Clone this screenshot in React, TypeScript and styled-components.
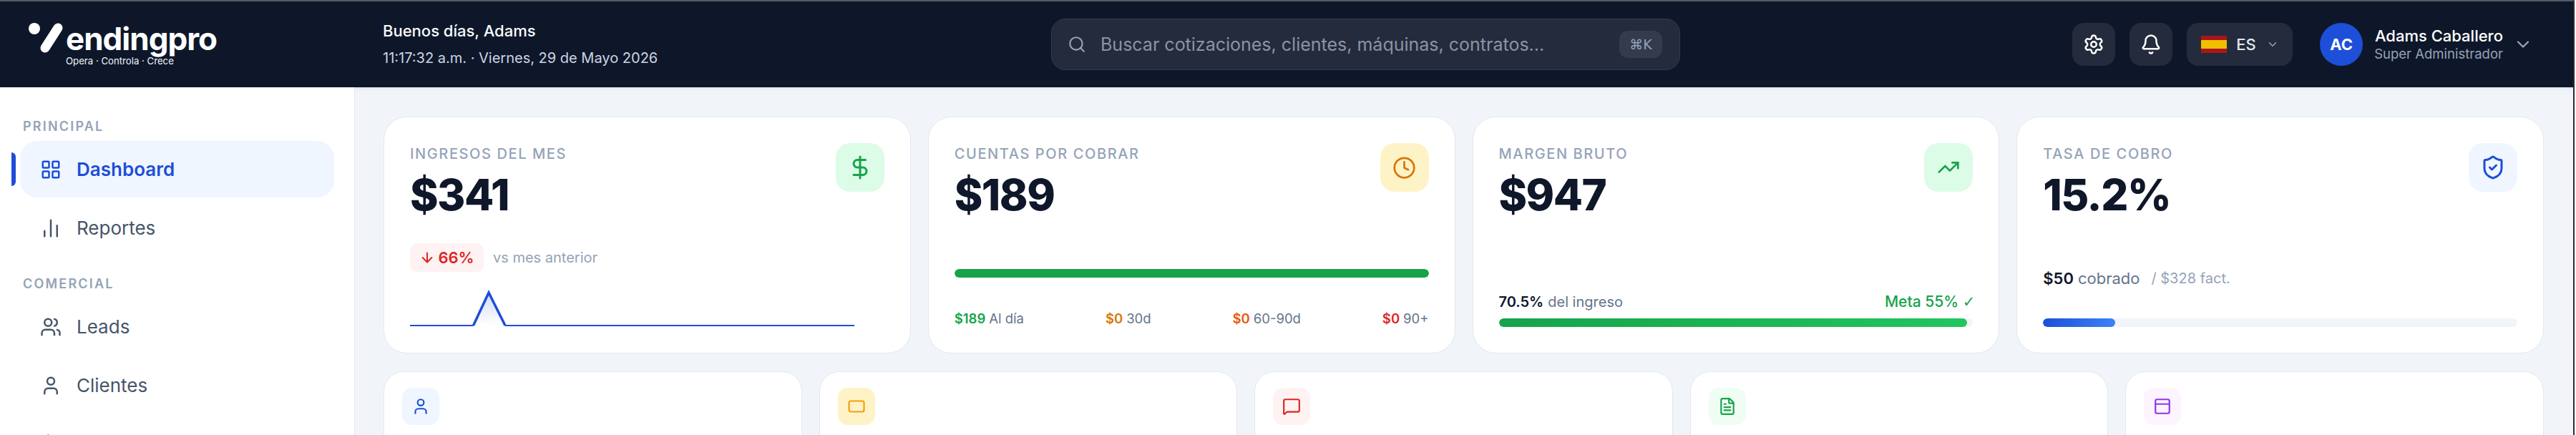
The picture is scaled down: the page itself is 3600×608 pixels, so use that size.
import React from "react";
import styled, { createGlobalStyle } from "styled-components";
import {
  Activity,
  ArrowDown,
  BarChart2,
  Bell,
  ChevronDown,
  Clock,
  DollarSign,
  FileText,
  LayoutGrid,
  MessageSquare,
  PanelTop,
  Search,
  Settings,
  ShieldCheck,
  TrendingUp,
  User,
  Users,
} from "lucide-react";

const GlobalStyle = createGlobalStyle`
  html, body { margin: 0; padding: 0; height: 100%; overflow: hidden; background: #fff; }
  * { box-sizing: border-box; }
  body { font-family: Inter, "Liberation Sans", sans-serif; }
`;

const Frame = styled.div`
  width: 3600px;
  height: 608px;
  padding-right: 2px;
  background: #fff;
`;

const Shell = styled.div`
  height: 100%;
  display: flex;
  flex-direction: column;
  overflow: hidden;
  border-top: 2px solid #555a63;
  border-right: 2px solid #2a2d33;
  background: #f1f5f9;
`;

const Header = styled.header`
  flex: 0 0 120px;
  display: flex;
  align-items: center;
  padding: 0 56px 0 38px;
  background: #0e172a;
`;

const LogoBox = styled.div`
  width: 497px;
  display: flex;
  align-items: flex-start;
`;

const LogoMark = styled.svg`
  flex: none;
  margin-top: -2px;
`;

const LogoWords = styled.div`
  display: flex;
  flex-direction: column;
`;

const LogoName = styled.div`
  font-size: 44px;
  line-height: 46px;
  font-weight: 700;
  letter-spacing: -1px;
  color: #fff;
`;

const LogoTag = styled.div`
  font-size: 13.2px;
  line-height: 16px;
  color: #f1f5f9;
`;

const Greeting = styled.div`
  width: 934px;
  display: flex;
  flex-direction: column;
  gap: 14px;
`;

const Hello = styled.div`
  font-size: 22px;
  line-height: 24px;
  font-weight: 500;
  color: #f8fafc;
`;

const Clockline = styled.div`
  font-size: 20px;
  line-height: 24px;
  color: #cbd5e1;
`;

const SearchBar = styled.div`
  width: 879px;
  height: 72px;
  display: flex;
  align-items: center;
  gap: 20px;
  padding: 0 24px 0 22px;
  background: #232b3c;
  border: 1px solid #333c4e;
  border-radius: 20px;
  color: #94a3b8;
`;

const SearchText = styled.div`
  flex: 1;
  font-size: 25px;
  color: #8b93a7;
`;

const Kbd = styled.div`
  width: 60px;
  height: 38px;
  display: flex;
  align-items: center;
  justify-content: center;
  font-family: "DejaVu Sans", sans-serif;
  font-size: 19px;
  color: #94a3b8;
  background: #333b4d;
  border-radius: 12px;
`;

const HeaderRight = styled.div`
  margin-left: auto;
  display: flex;
  align-items: center;
`;

const RoundBtn = styled.div`
  width: 60px;
  height: 60px;
  margin-right: 20px;
  display: flex;
  align-items: center;
  justify-content: center;
  color: #fff;
  background: #232b3c;
  border-radius: 16px;
`;

const LangBtn = styled.div`
  width: 148px;
  height: 60px;
  margin-right: 38px;
  display: flex;
  align-items: center;
  padding-left: 20px;
  background: #232b3c;
  border-radius: 16px;
  color: #94a3b8;
`;

const Flag = styled.div`
  width: 36px;
  height: 24px;
  background: linear-gradient(#aa151b 25%, #f1bf00 25%, #f1bf00 75%, #aa151b 75%);
`;

const LangText = styled.span`
  margin: 0 14px 0 13px;
  font-size: 22px;
  font-weight: 500;
  color: #e2e8f0;
`;

const Avatar = styled.div`
  width: 60px;
  height: 60px;
  display: flex;
  align-items: center;
  justify-content: center;
  border-radius: 50%;
  background: #1d4fd8;
  color: #fff;
  font-size: 22px;
  font-weight: 700;
`;

const UserInfo = styled.div`
  margin: 0 14px 0 16px;
  display: flex;
  flex-direction: column;
  align-items: flex-end;
`;

const UserName = styled.div`
  font-size: 22px;
  line-height: 26px;
  font-weight: 500;
  color: #fff;
`;

const UserRole = styled.div`
  font-size: 18.5px;
  line-height: 24px;
  color: #94a3b8;
`;

const Body = styled.div`
  flex: 1;
  display: flex;
  min-height: 0;
  box-shadow: inset 0 6px 6px -6px rgba(15, 23, 42, 0.12);
`;

const Sidebar = styled.aside`
  flex: 0 0 495px;
  padding: 44px 28px 0;
  background: #fff;
  border-right: 1px solid #e2e8f0;
`;

const SectionLabel = styled.div<{ $spaced?: boolean }>`
  margin: ${(p) => (p.$spaced ? "28px" : "0")} 0 9px 4px;
  font-size: 18px;
  line-height: 22px;
  font-weight: 600;
  letter-spacing: 2.2px;
  color: #94a3b8;
`;

const NavItem = styled.div<{ $active?: boolean }>`
  position: relative;
  width: 439px;
  height: 79px;
  margin-bottom: 3px;
  display: flex;
  align-items: center;
  gap: 21px;
  padding-left: 28px;
  border-radius: 24px;
  font-size: 26px;
  font-weight: ${(p) => (p.$active ? 600 : 400)};
  color: ${(p) => (p.$active ? "#1d4ed8" : "#475569")};
  background: ${(p) => (p.$active ? "#eff6ff" : "transparent")};
`;

const ActiveBar = styled.span`
  position: absolute;
  left: -12px;
  top: 16px;
  width: 6px;
  height: 47px;
  background: #1d4ed8;
  border-radius: 0 6px 6px 0;
`;

const Main = styled.main`
  flex: 1;
  padding: 41px 41px 0 40px;
  display: flex;
  flex-direction: column;
  gap: 25px;
  overflow: hidden;
`;

const KpiRow = styled.div`
  display: grid;
  grid-template-columns: repeat(4, 1fr);
  gap: 24px;
`;

const Card = styled.section`
  flex: none;
  height: 331px;
  display: flex;
  flex-direction: column;
  padding: 36px;
  background: #fff;
  border: 1px solid #e2e8f0;
  border-radius: 32px;
`;

const CardTop = styled.div`
  display: flex;
  justify-content: space-between;
  align-items: flex-start;
`;

const KpiLabel = styled.div`
  margin-top: 3px;
  font-size: 20px;
  line-height: 24px;
  font-weight: 500;
  letter-spacing: 1.6px;
  color: #94a3b8;
`;

const KpiValue = styled.div`
  margin-top: 11px;
  font-size: 60px;
  line-height: 68px;
  font-weight: 800;
  letter-spacing: -1.5px;
  color: #0f172a;
`;

const IconBox = styled.div<{ $bg: string; $fg: string; $size?: number }>`
  width: ${(p) => p.$size ?? 68}px;
  height: ${(p) => p.$size ?? 68}px;
  flex: none;
  display: flex;
  align-items: center;
  justify-content: center;
  border-radius: ${(p) => (p.$size ? 14 : 20)}px;
  background: ${(p) => p.$bg};
  color: ${(p) => p.$fg};
`;

const CardFoot = styled.div`
  margin-top: auto;
`;

const DeltaRow = styled.div`
  display: flex;
  align-items: center;
  gap: 13px;
  margin-bottom: 25px;
`;

const DeltaPill = styled.div`
  width: 103px;
  height: 40px;
  display: flex;
  align-items: center;
  justify-content: center;
  gap: 4px;
  border-radius: 10px;
  background: #fef2f2;
  color: #dc2626;
  font-size: 22px;
  font-weight: 600;
`;

const Muted = styled.span`
  font-size: 20px;
  color: #94a3b8;
`;

const Sparkline = styled.svg`
  display: block;
  width: 621px;
  height: 52px;
`;

const Track = styled.div`
  height: 12px;
  border-radius: 6px;
  background: #f1f5f9;
  overflow: hidden;
`;

const Fill = styled.div<{ $from: string; $to: string }>`
  height: 100%;
  border-radius: 6px;
  background: linear-gradient(90deg, ${(p) => p.$from}, ${(p) => p.$to});
`;

const AgingRow = styled.div`
  margin-top: 45px;
  display: flex;
  justify-content: space-between;
  font-size: 18.5px;
  line-height: 24px;
  color: #64748b;
`;

const Amount = styled.b<{ $color: string }>`
  font-weight: 600;
  color: ${(p) => p.$color};
  margin-right: 5px;
`;

const BarHead = styled.div<{ $gap: number; $size: number }>`
  display: flex;
  justify-content: space-between;
  margin-bottom: ${(p) => p.$gap}px;
  font-size: ${(p) => p.$size}px;
  line-height: 24px;
  color: #64748b;
`;

const Strong = styled.b`
  font-weight: 600;
  color: #0f172a;
  margin-right: 6px;
`;

const Goal = styled.span`
  margin-right: -3px;
  font-size: 21px;
  font-weight: 500;
  color: #16a34a;
`;

const GoalCheck = styled.span`
  font-family: "DejaVu Sans", sans-serif;
  font-weight: 700;
`;

const CollectedGroup = styled.div`
  display: flex;
  gap: 16px;
`;

const Fact = styled.span`
  font-size: 20px;
  color: #94a3b8;
`;

const ModuleRow = styled.div`
  display: grid;
  grid-template-columns: repeat(5, 1fr);
  gap: 24px;
`;

const ModuleCard = styled.section`
  flex: none;
  height: 200px;
  padding: 22px 25px;
  background: #fff;
  border: 1px solid #e2e8f0;
  border-radius: 28px;
`;

const kpiIcon = { size: 36, strokeWidth: 2 };
const modIcon = { size: 26, strokeWidth: 2 };

export default function App() {
  return (
    <Frame>
      <GlobalStyle />
      <Shell>
        <Header>
          <LogoBox>
            <LogoMark width="54" height="52" viewBox="0 0 54 52">
              <circle cx="10" cy="11" r="8" fill="#fff" />
              <line x1="43" y1="10" x2="25" y2="38" stroke="#fff" strokeWidth="13" strokeLinecap="round" />
            </LogoMark>
            <LogoWords>
              <LogoName>endingpro</LogoName>
              <LogoTag>Opera · Controla · Crece</LogoTag>
            </LogoWords>
          </LogoBox>
          <Greeting>
            <Hello>Buenos días, Adams</Hello>
            <Clockline>11:17:32 a.m. · Viernes, 29 de Mayo 2026</Clockline>
          </Greeting>
          <SearchBar>
            <Search size={26} strokeWidth={2} />
            <SearchText>Buscar cotizaciones, clientes, máquinas, contratos...</SearchText>
            <Kbd>⌘K</Kbd>
          </SearchBar>
          <HeaderRight>
            <RoundBtn><Settings size={30} strokeWidth={2} /></RoundBtn>
            <RoundBtn><Bell size={30} strokeWidth={2} /></RoundBtn>
            <LangBtn>
              <Flag />
              <LangText>ES</LangText>
              <ChevronDown size={18} />
            </LangBtn>
            <Avatar>AC</Avatar>
            <UserInfo>
              <UserName>Adams Caballero</UserName>
              <UserRole>Super Administrador</UserRole>
            </UserInfo>
            <ChevronDown size={28} color="#94a3b8" />
          </HeaderRight>
        </Header>
        <Body>
          <Sidebar>
            <SectionLabel>PRINCIPAL</SectionLabel>
            <NavItem $active>
              <ActiveBar />
              <LayoutGrid size={30} strokeWidth={2} />
              Dashboard
            </NavItem>
            <NavItem>
              <BarChart2 size={30} strokeWidth={2} />
              Reportes
            </NavItem>
            <SectionLabel $spaced>COMERCIAL</SectionLabel>
            <NavItem>
              <Users size={30} strokeWidth={2} />
              Leads
            </NavItem>
            <NavItem>
              <User size={30} strokeWidth={2} />
              Clientes
            </NavItem>
            <NavItem>
              <Activity size={30} strokeWidth={2} />
            </NavItem>
          </Sidebar>
          <Main>
            <KpiRow>
              <Card>
                <CardTop>
                  <div>
                    <KpiLabel>INGRESOS DEL MES</KpiLabel>
                    <KpiValue>$341</KpiValue>
                  </div>
                  <IconBox $bg="#dcfce7" $fg="#16a34a"><DollarSign {...kpiIcon} /></IconBox>
                </CardTop>
                <CardFoot>
                  <DeltaRow>
                    <DeltaPill><ArrowDown size={22} strokeWidth={2.2} />66%</DeltaPill>
                    <Muted>vs mes anterior</Muted>
                  </DeltaRow>
                  <Sparkline viewBox="0 0 621 52" preserveAspectRatio="none">
                    <defs>
                      <linearGradient id="spark" x1="0" y1="0" x2="0" y2="1">
                        <stop offset="0" stopColor="#1d4ed8" stopOpacity="0.2" />
                        <stop offset="1" stopColor="#1d4ed8" stopOpacity="0" />
                      </linearGradient>
                    </defs>
                    <path d="M88.5 50 L110 4 L133 50 Z" fill="url(#spark)" />
                    <path d="M0 50 H88.5 M133 50 H621" fill="none" stroke="#1d4ed8" strokeWidth="2" />
                    <path d="M88.5 50 L110 4 L133 50" fill="none" stroke="#1d4ed8" strokeWidth="3.5" />
                  </Sparkline>
                </CardFoot>
              </Card>
              <Card>
                <CardTop>
                  <div>
                    <KpiLabel>CUENTAS POR COBRAR</KpiLabel>
                    <KpiValue>$189</KpiValue>
                  </div>
                  <IconBox $bg="#fef3c7" $fg="#d97706"><Clock size={33} strokeWidth={2} /></IconBox>
                </CardTop>
                <CardFoot>
                  <Track><Fill $from="#16a34a" $to="#16a34a" style={{ width: "100%" }} /></Track>
                  <AgingRow>
                    <span><Amount $color="#16a34a">$189</Amount>Al día</span>
                    <span><Amount $color="#d97706">$0</Amount>30d</span>
                    <span><Amount $color="#ea580c">$0</Amount>60-90d</span>
                    <span><Amount $color="#dc2626">$0</Amount>90+</span>
                  </AgingRow>
                </CardFoot>
              </Card>
              <Card>
                <CardTop>
                  <div>
                    <KpiLabel>MARGEN BRUTO</KpiLabel>
                    <KpiValue>$947</KpiValue>
                  </div>
                  <IconBox $bg="#dcfce7" $fg="#16a34a"><TrendingUp size={32} strokeWidth={2} /></IconBox>
                </CardTop>
                <CardFoot>
                  <BarHead $gap={11} $size={20}>
                    <span><Strong>70.5%</Strong>del ingreso</span>
                    <Goal>Meta 55% <GoalCheck>✓</GoalCheck></Goal>
                  </BarHead>
                  <Track><Fill $from="#16a34a" $to="#22c55e" style={{ width: "98.8%" }} /></Track>
                </CardFoot>
              </Card>
              <Card>
                <CardTop>
                  <div>
                    <KpiLabel>TASA DE COBRO</KpiLabel>
                    <KpiValue>15.2%</KpiValue>
                  </div>
                  <IconBox $bg="#eff6ff" $fg="#1d4ed8"><ShieldCheck {...kpiIcon} /></IconBox>
                </CardTop>
                <CardFoot>
                  <BarHead $gap={44} $size={22}>
                    <CollectedGroup>
                      <span><Strong>$50</Strong>cobrado</span>
                      <Fact>/ $328 fact.</Fact>
                    </CollectedGroup>
                  </BarHead>
                  <Track><Fill $from="#1d4ed8" $to="#3b82f6" style={{ width: "15.2%" }} /></Track>
                </CardFoot>
              </Card>
            </KpiRow>
            <ModuleRow>
              <ModuleCard><IconBox $size={52} $bg="#eff6ff" $fg="#1d4ed8"><User {...modIcon} /></IconBox></ModuleCard>
              <ModuleCard>
                <IconBox $size={52} $bg="#fef3c7" $fg="#f59e0b">
                  <svg width="24" height="18" viewBox="0 0 24 18" fill="none" stroke="currentColor" strokeWidth="2.2">
                    <rect x="1.5" y="1.5" width="21" height="15" rx="2.5" />
                  </svg>
                </IconBox>
              </ModuleCard>
              <ModuleCard><IconBox $size={52} $bg="#fef2f2" $fg="#dc2626"><MessageSquare {...modIcon} /></IconBox></ModuleCard>
              <ModuleCard><IconBox $size={52} $bg="#f0fdf4" $fg="#16a34a"><FileText {...modIcon} /></IconBox></ModuleCard>
              <ModuleCard><IconBox $size={52} $bg="#fdf4ff" $fg="#9333ea"><PanelTop {...modIcon} /></IconBox></ModuleCard>
            </ModuleRow>
          </Main>
        </Body>
      </Shell>
    </Frame>
  );
}
